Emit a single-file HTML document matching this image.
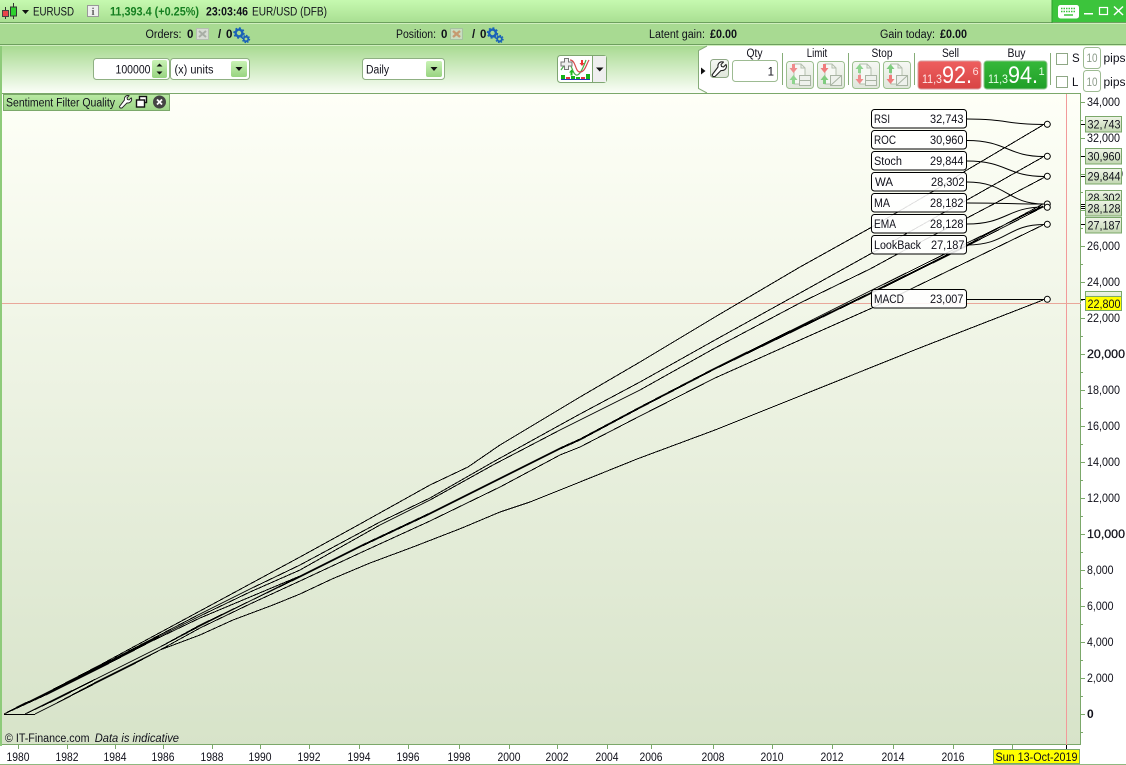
<!DOCTYPE html>
<html><head><meta charset="utf-8"><title>EURUSD</title>
<style>
html,body{margin:0;padding:0;background:#fff;width:1126px;height:765px;overflow:hidden}
svg{display:block}
text{font-family:"Liberation Sans",Arial,sans-serif;font-size:11.5px;fill:#10101a}
.b{font-weight:bold}
.m{text-anchor:middle}
.e{text-anchor:end}
.ln{fill:none;stroke:#000;stroke-width:1}
.cr{shape-rendering:crispEdges}
.ax{font-size:12px}
.tag{fill:url(#tg);stroke:#7ba86a;stroke-width:1}
.lbl{fill:#fff;fill-opacity:.88;stroke:#000;stroke-width:1}
.mk{fill:#fdfff5;stroke:#000;stroke-width:1}
.btn{fill:url(#gb);stroke:#9dbf90;stroke-width:1}
</style></head><body>
<svg width="1126" height="765" viewBox="0 0 1126 765" xmlns="http://www.w3.org/2000/svg">
<defs>
<linearGradient id="t1" x1="0" y1="0" x2="0" y2="1"><stop offset="0" stop-color="#c6f9b0"/><stop offset="1" stop-color="#a8de91"/></linearGradient>
<linearGradient id="t3" x1="0" y1="0" x2="0" y2="1"><stop offset="0" stop-color="#a8da91"/><stop offset="1" stop-color="#fbfef8"/></linearGradient>
<linearGradient id="ch" x1="0" y1="0" x2="0" y2="1"><stop offset="0" stop-color="#fefff7"/><stop offset="1" stop-color="#d7e3c9"/></linearGradient>
<linearGradient id="tg" x1="0" y1="0" x2="0" y2="1"><stop offset="0" stop-color="#eef4e6"/><stop offset="1" stop-color="#c2d6b2"/></linearGradient>
<linearGradient id="gb" x1="0" y1="0" x2="0" y2="1"><stop offset="0" stop-color="#f6f8f4"/><stop offset="1" stop-color="#dfe6da"/></linearGradient>
<linearGradient id="sb" x1="0" y1="0" x2="0" y2="1"><stop offset="0" stop-color="#c9f2b5"/><stop offset="1" stop-color="#98d481"/></linearGradient>
<linearGradient id="red" x1="0" y1="0" x2="0" y2="1"><stop offset="0" stop-color="#ee5f5f"/><stop offset="1" stop-color="#d84444"/></linearGradient>
<linearGradient id="grn" x1="0" y1="0" x2="0" y2="1"><stop offset="0" stop-color="#36b83a"/><stop offset="1" stop-color="#1f9f28"/></linearGradient>
<linearGradient id="ttl" x1="0" y1="0" x2="0" y2="1"><stop offset="0" stop-color="#b9eaa4"/><stop offset="1" stop-color="#9dd488"/></linearGradient>
<g id="gear"><circle cx="5" cy="5" r="3.4" fill="none" stroke="#1a62b8" stroke-width="2.4"/><circle cx="5" cy="5" r="5" fill="none" stroke="#1a62b8" stroke-width="1.4" stroke-dasharray="2 1.9"/><circle cx="12" cy="11" r="2.3" fill="none" stroke="#1a62b8" stroke-width="1.8"/><circle cx="12" cy="11" r="3.6" fill="none" stroke="#1a62b8" stroke-width="1.2" stroke-dasharray="1.6 1.2"/></g>
<path id="wr" d="M1 15 L2 16.500 L4 16.500 L10 10.500 C13 11 15.500 9 15.500 6 L15 4.500 L12.500 7 L10.500 6.500 L10 4.500 L12.500 2 C9 1 6.500 3.500 7 7 Z" fill="#fff" stroke="#222" stroke-width="1.1" stroke-linejoin="round"/>
<g id="tick"><path d="M10 4h7l4 4v16H10z" fill="#f6f8f4" stroke="#b4bfae"/><path d="M17 4v4h4" fill="none" stroke="#b4bfae"/></g>
<path id="dn" d="M0 0h7l-3.500 4z" fill="#111"/>
</defs>

<!-- title bar -->
<rect x="0" y="0" width="1126" height="23" fill="url(#t1)"/>
<rect x="0" y="22" width="1126" height="1" fill="#6d9f5e"/>
<rect x="0" y="23" width="1126" height="1" fill="#cfeebe"/>
<rect x="0" y="24" width="1126" height="20" fill="#a8da92"/>
<rect x="0" y="44" width="1126" height="1" fill="#6d9f5e"/>
<rect x="0" y="45" width="1126" height="1" fill="#cfeebe"/>
<rect x="0" y="46" width="1126" height="47" fill="url(#t3)"/>

<!-- logo -->
<path d="M5.500 7V19" stroke="#333" /><rect x="2.500" y="10.500" width="6" height="6" fill="#e8454a" stroke="#444"/>
<path d="M13.500 3V19" stroke="#333"/><rect x="10.500" y="7" width="6" height="9" fill="#2ed12e" stroke="#333"/>
<path d="M22 10h7l-3.500 4z" fill="#111"/>
<text x="33" y="15.500" textLength="41" lengthAdjust="spacingAndGlyphs">EURUSD</text>
<rect x="87.500" y="5.500" width="11" height="11" fill="#eef0ee" stroke="#999"/>
<text x="93" y="15" class="m b" style="fill:#666;font-family:'Liberation Serif',serif;font-size:11px">i</text>
<text x="110" y="15.500" class="b" style="fill:#157f20" textLength="89" lengthAdjust="spacingAndGlyphs">11,393.4 (+0.25%)</text>
<text x="206" y="15.500" class="b" textLength="42" lengthAdjust="spacingAndGlyphs">23:03:46</text>
<text x="252" y="15.500" textLength="75" lengthAdjust="spacingAndGlyphs">EUR/USD (DFB)</text>

<!-- window buttons -->
<rect x="1052" y="0" width="74" height="22" fill="#3cc43c"/>
<rect x="1051.500" y="0" width="1" height="23" fill="#2e9f2e"/>
<rect x="1058" y="5" width="21" height="13.500" rx="2.500" fill="#fff"/>
<path d="M1061 8.500h15M1061 11.500h15" stroke="#3cc43c" stroke-width="1.500" stroke-dasharray="1.500 1"/><path d="M1064 15h9" stroke="#3cc43c" stroke-width="1.500"/>
<rect x="1084" y="13" width="9" height="1.500" fill="#fff"/>
<rect x="1099.500" y="7.500" width="8" height="7" fill="none" stroke="#fff" stroke-width="1.200"/>
<path d="M1114 6.500l9 8.500M1123 6.500l-9 8.500" stroke="#fff" stroke-width="1.500"/>

<!-- row 2 -->
<text x="145.500" y="38" textLength="36" lengthAdjust="spacingAndGlyphs">Orders:</text><text x="187" y="38" class="b">0</text>
<rect x="196.500" y="28.500" width="12" height="11" fill="#d7dcd4" stroke="#b5bfb0"/><path d="M199 31l7 6M206 31l-7 6" stroke="#a8aea5" stroke-width="2"/>
<text x="218" y="38" class="b">/</text><text x="226" y="38" class="b">0</text>
<use href="#gear" x="234" y="28"/>
<text x="396" y="38" textLength="40" lengthAdjust="spacingAndGlyphs">Position:</text><text x="441" y="38" class="b">0</text>
<rect x="450.500" y="28.500" width="12" height="11" fill="#c9dcc0" stroke="#a6c2a0"/><path d="M453 31l7 6M460 31l-7 6" stroke="#c79a70" stroke-width="2.400"/>
<text x="472" y="38" class="b">/</text><text x="480" y="38" class="b">0</text>
<use href="#gear" x="487.500" y="28"/>
<text x="649" y="38" textLength="56" lengthAdjust="spacingAndGlyphs">Latent gain:</text><text x="710" y="38" class="b" textLength="27" lengthAdjust="spacingAndGlyphs">£0.00</text>
<text x="880" y="38" textLength="55" lengthAdjust="spacingAndGlyphs">Gain today:</text><text x="940" y="38" class="b" textLength="27" lengthAdjust="spacingAndGlyphs">£0.00</text>

<!-- row 3 left -->
<rect x="93.500" y="58.500" width="76" height="21" rx="3" fill="#fff" stroke="#8fb083"/>
<text x="150.500" y="73.500" class="e" textLength="35" lengthAdjust="spacingAndGlyphs">100000</text>
<rect x="152" y="60" width="15" height="18" rx="2" fill="url(#sb)"/>
<path d="M156.500 66.500l3-3 3 3z M156.500 71.500l3 3 3-3z" fill="#111"/>
<rect x="170.500" y="58.500" width="79" height="21" rx="3" fill="#fff" stroke="#8fb083"/>
<text x="174.500" y="73.500" textLength="39" lengthAdjust="spacingAndGlyphs">(x) units</text>
<rect x="231" y="61" width="16" height="16" rx="2" fill="url(#sb)"/><use href="#dn" x="235.500" y="67"/>
<rect x="362.500" y="58.500" width="82" height="21" rx="3" fill="#fff" stroke="#8fb083"/>
<text x="366" y="73.500" textLength="23" lengthAdjust="spacingAndGlyphs">Daily</text>
<rect x="426" y="61" width="16" height="16" rx="2" fill="url(#sb)"/><use href="#dn" x="430.500" y="67"/>
<!-- chart button -->
<rect x="557.500" y="55.500" width="49" height="27" rx="3" fill="#fff" stroke="#7fa672"/>
<rect x="593" y="56" width="13" height="26" fill="#efefef"/><path d="M592.500 56v26" stroke="#7fa672"/>
<path d="M596 67.500h7.500l-3.750 4z" fill="#111"/>
<path d="M561 70c6-9 8-10 12 1 3 7 7 6 13-11" fill="none" stroke="#48b048" stroke-width="1.200"/>
<path d="M570 60c6 0 5 12 10 12s6-7 9-12" fill="none" stroke="#d64a4a" stroke-width="1.200"/>
<path d="M564.500 58.500h4v3.500h3.500v4h-3.500v3.500h-4v-3.500h-3.500v-4h3.500z" fill="#eee" stroke="#777"/>
<path d="M571.500 69.500l2.500 3h-1.500v3h-2v-3h-1.500z" fill="#1db91d"/><path d="M581 60h2v3h1.500l-2.500 3-2.500-3h1.500z" fill="#e33"/>
<path d="M561 79.500h29" stroke="#2233bb"/>
<g fill="#17b017"><rect x="561" y="75" width="4" height="4"/><rect x="571" y="76" width="4" height="3"/><rect x="586" y="74" width="4" height="5"/></g>
<g fill="#e0383c"><rect x="566" y="77" width="4" height="2"/><rect x="581" y="77" width="4" height="2"/></g><rect x="576" y="77" width="4" height="2" fill="#17b017"/>

<!-- right panel -->
<path d="M707 46H1126V93H707L698 88.500V50.500Z" fill="#fff"/>
<path d="M707 46L698.500 50.500V88.500L707 93" fill="none" stroke="#86ad78"/>
<path d="M701 67.500l4.500 3.500-4.500 3.500z" fill="#111"/>
<rect x="710.500" y="59.500" width="18" height="18" rx="3" fill="url(#gb)" stroke="#8fa886"/>
<use href="#wr" x="711" y="60"/>
<rect x="732.500" y="60.500" width="45" height="21" rx="3" fill="#fff" stroke="#9dbb92"/>
<text x="774" y="75.500" class="e">1</text>
<text x="754.500" y="57" class="m" textLength="16" lengthAdjust="spacingAndGlyphs">Qty</text>
<text x="817" y="57" class="m" textLength="20.500" lengthAdjust="spacingAndGlyphs">Limit</text>
<text x="882" y="57" class="m" textLength="21" lengthAdjust="spacingAndGlyphs">Stop</text>
<text x="950.500" y="57" class="m" textLength="17" lengthAdjust="spacingAndGlyphs">Sell</text>
<text x="1016.500" y="57" class="m" textLength="18" lengthAdjust="spacingAndGlyphs">Buy</text>
<path d="M782.500 53v32M848.500 53v32M914.500 53v32M1050.500 53v32" stroke="#86ad78"/>
<g>
<rect x="786.500" y="61.500" width="27" height="27" rx="3" class="btn"/>
<rect x="817.500" y="61.500" width="27" height="27" rx="3" class="btn"/>
<rect x="852.500" y="61.500" width="27" height="27" rx="3" class="btn"/>
<rect x="883.500" y="61.500" width="27" height="27" rx="3" class="btn"/>
</g>
<use href="#tick" x="784" y="60"/><use href="#tick" x="815" y="60"/><use href="#tick" x="850" y="60"/><use href="#tick" x="881" y="60"/>
<!-- arrows -->
<path d="M792 64h3v4h2.500l-4 5-4-5h2.500z" fill="#ef8c8c"/><path d="M792 84v-4h-2.500l4-5 4 5h-2.500v4z" fill="#8fd48f"/>
<path d="M823 64h3v4h2.500l-4 5-4-5h2.500z" fill="#ef7c7c"/><path d="M823 84v-4h-2.500l4-5 4 5h-2.500v4z" fill="#7fcc7f"/>
<path d="M858 73v-4h-2.500l4-5 4 5h-2.500v4z" fill="#8fd48f"/><path d="M858 75h3v4h2.500l-4 5-4-5h2.500z" fill="#ef8c8c"/>
<path d="M889 73v-4h-2.500l4-5 4 5h-2.500v4z" fill="#7fcc7f"/><path d="M889 75h3v4h2.500l-4 5-4-5h2.500z" fill="#ef7c7c"/>
<g fill="#eef1ec" stroke="#a9b4a4"><rect x="799.500" y="75.500" width="11" height="10"/><rect x="830.500" y="75.500" width="11" height="10"/><rect x="865.500" y="75.500" width="11" height="10"/><rect x="896.500" y="75.500" width="11" height="10"/></g>
<path d="M799.500 80.500h11M865.500 80.500h11M830.500 85.500l11-10M896.500 85.500l11-10" stroke="#a9b4a4" fill="none"/>

<rect x="918" y="61" width="63" height="28" rx="3" fill="url(#red)" stroke="#d9a0a0"/>
<rect x="984" y="61" width="63" height="28" rx="3" fill="url(#grn)" stroke="#8fc78f"/>
<text x="922" y="83" style="fill:#ffe8e8" textLength="20" lengthAdjust="spacingAndGlyphs">11,3</text>
<text x="942" y="83" style="fill:#fff;font-size:24px" textLength="30" lengthAdjust="spacingAndGlyphs">92.</text>
<text x="972.500" y="75" style="fill:#ffdcdc;font-size:11px">6</text>
<text x="988" y="83" style="fill:#e8ffe8" textLength="20" lengthAdjust="spacingAndGlyphs">11,3</text>
<text x="1008" y="83" style="fill:#fff;font-size:24px" textLength="30" lengthAdjust="spacingAndGlyphs">94.</text>
<text x="1038.500" y="75" style="fill:#e0ffe0;font-size:11px">1</text>

<rect x="1056.500" y="53.500" width="11" height="11" fill="#fff" stroke="#8fa886"/>
<rect x="1056.500" y="76.500" width="11" height="11" fill="#fff" stroke="#8fa886"/>
<text x="1072" y="62">S</text><text x="1072" y="86">L</text>
<rect x="1083.500" y="47.500" width="17" height="21" rx="3" fill="#fff" stroke="#9dbb92"/>
<rect x="1083.500" y="70.500" width="17" height="21" rx="3" fill="#fff" stroke="#9dbb92"/>
<text x="1092" y="62" class="m" style="fill:#8a9a88" textLength="11" lengthAdjust="spacingAndGlyphs">10</text><text x="1092" y="86" class="m" style="fill:#8a9a88" textLength="11" lengthAdjust="spacingAndGlyphs">10</text>
<text x="1103.500" y="62" textLength="22" lengthAdjust="spacingAndGlyphs">pips</text><text x="1103.500" y="86" textLength="22" lengthAdjust="spacingAndGlyphs">pips</text>

<!-- chart -->
<rect x="2" y="94" width="1079" height="651" fill="url(#ch)"/>
<rect x="0" y="46" width="2" height="700" fill="#8ecb7a"/>
<path d="M2 93.500H1081" stroke="#7ba86a"/>
<path d="M1080.500 93V745" stroke="#7ba86a"/>
<path d="M2 744.500H1081" stroke="#7ba86a"/>
<path d="M1066.500 94V745" stroke="#f29a9a"/>
<path d="M2 303.500H1081" stroke="#e9a79a"/>

<!-- curves -->
<g>
<path class="ln cr" d="M4 714.500H35"/>
<polyline class="ln cr" points="4,714 50,691 100,665 150,638 200,611 250,584 300,557 360,524 430,485 468,467 500,445 580,397 640,362 715,317 800,267 872,227 932,192 967,170 1043,125"/>
<polyline class="ln cr" points="4,714 50,692 100,666 150,640 200,614 250,589 300,565 380,522 430,498 493,462 560,425 580,414 640,382 715,340 800,293 872,253 943,213 967,200 1043,157"/>
<polyline class="ln cr" points="4,714 50,693 100,667 150,641 200,616 250,592 300,570 380,525 430,500 493,465 560,430 580,420 640,390 715,348 800,303 870,269 905,250 967,218 1045,177"/>
<polyline class="ln cr" points="4,714 25,703 50,693 100,668 150,642 200,618 250,597 300,576 360,546 430,513 500,478 560,448 580,439 640,407 715,368 800,327 870,293 967,245 1043,204"/>
<polyline class="ln cr" points="25,714 55,699 100,677 160,647 200,625 250,601 300,576 360,546 430,513 500,478 560,448 580,439 640,407 715,368 800,326 870,291 967,243 1043,206"/>
<polyline class="ln cr" points="25,714 55,700 100,677 160,647 200,626 250,601 300,577 360,547 430,514 500,479 560,449 580,440 640,408 715,369 800,328 870,294 967,246 1043,207"/>
<polyline class="ln cr" points="35,714 55,704 100,680 130,665 160,650 200,628 250,604 300,581 360,553 430,521 500,487 560,455 580,447 640,416 715,378 800,340 872,308 913,288 1043,225"/>
<polyline class="ln cr" points="35,714 55,704 100,681 130,666 160,650 200,635 233,620 273,605 300,594 332,579 370,563 413,547 462,528 500,512 530,502 580,482 637,459 715,430 800,396 917,349 1043,300"/>
</g>

<!-- connectors -->
<path class="ln" d="M967 119C1007 119 1007 124.500 1044 124.500"/>
<path class="ln" d="M967 140.500C1007 140.500 1007 156.500 1044 156.500"/>
<path class="ln" d="M967 161C1007 161 1007 176.500 1044 176.500"/>
<path class="ln" d="M967 182C1007 182 1007 204 1044 204"/>
<path class="ln" d="M967 203C1007 203 1007 204 1044 204"/>
<path class="ln" d="M967 224C1007 224 1007 207 1044 207"/>
<path class="ln" d="M967 245C1007 245 1007 224.500 1044 224.500"/>
<path class="ln" d="M967 299.500H1044"/>

<!-- labels -->
<g>
<rect class="lbl" x="871.500" y="109.500" width="95" height="18.500" rx="3"/>
<rect class="lbl" x="871.500" y="130.500" width="95" height="18.500" rx="3"/>
<rect class="lbl" x="871.500" y="151.500" width="95" height="18.500" rx="3"/>
<rect class="lbl" x="871.500" y="172.500" width="95" height="18.500" rx="3"/>
<rect class="lbl" x="871.500" y="193.500" width="95" height="18.500" rx="3"/>
<rect class="lbl" x="871.500" y="214.500" width="95" height="18.500" rx="3"/>
<rect class="lbl" x="871.500" y="235.500" width="95" height="18.500" rx="3"/>
<rect class="lbl" x="871.500" y="289.500" width="95" height="18.500" rx="3"/>
</g>
<text x="874" y="123" textLength="16" lengthAdjust="spacingAndGlyphs">RSI</text><text x="930" y="123" textLength="33.500" lengthAdjust="spacingAndGlyphs">32,743</text>
<text x="874" y="144" textLength="22" lengthAdjust="spacingAndGlyphs">ROC</text><text x="930" y="144" textLength="33.500" lengthAdjust="spacingAndGlyphs">30,960</text>
<text x="874" y="165" textLength="28" lengthAdjust="spacingAndGlyphs">Stoch</text><text x="930" y="165" textLength="33.500" lengthAdjust="spacingAndGlyphs">29,844</text>
<text x="875" y="186" textLength="18" lengthAdjust="spacingAndGlyphs">WA</text><text x="931" y="186" textLength="33.500" lengthAdjust="spacingAndGlyphs">28,302</text>
<text x="874" y="207" textLength="16" lengthAdjust="spacingAndGlyphs">MA</text><text x="930" y="207" textLength="33.500" lengthAdjust="spacingAndGlyphs">28,182</text>
<text x="874" y="228" textLength="22" lengthAdjust="spacingAndGlyphs">EMA</text><text x="930" y="228" textLength="33.500" lengthAdjust="spacingAndGlyphs">28,128</text>
<text x="874" y="249" textLength="47" lengthAdjust="spacingAndGlyphs">LookBack</text><text x="931" y="249" textLength="33.500" lengthAdjust="spacingAndGlyphs">27,187</text>
<text x="874" y="303" textLength="30" lengthAdjust="spacingAndGlyphs">MACD</text><text x="930" y="303" textLength="33.500" lengthAdjust="spacingAndGlyphs">23,007</text>

<!-- markers -->
<circle class="mk" cx="1047.300" cy="124.300" r="3"/>
<circle class="mk" cx="1047.300" cy="156.300" r="3"/>
<circle class="mk" cx="1047.300" cy="176.300" r="3"/>
<circle class="mk" cx="1047.300" cy="204" r="3"/>
<circle class="mk" cx="1047.300" cy="207.300" r="3"/>
<circle class="mk" cx="1047.300" cy="224.300" r="3"/>
<circle class="mk" cx="1047.300" cy="299.300" r="3"/>

<!-- title tab -->
<rect x="3.500" y="94.500" width="166" height="16" fill="url(#ttl)" stroke="#7ba86a"/>
<text x="6" y="106.500" textLength="109" lengthAdjust="spacingAndGlyphs">Sentiment Filter Quality</text>
<use href="#wr" transform="translate(118.500,94) scale(.85)"/>
<rect x="139.500" y="96.500" width="7" height="6" fill="#fff" stroke="#111" stroke-width="1.400"/>
<rect x="136.500" y="100" width="8" height="7" fill="#fff" stroke="#111" stroke-width="1.400"/>
<circle cx="159.500" cy="102" r="6.500" fill="#444"/>
<path d="M157 99.500l5 5M162 99.500l-5 5" stroke="#fff" stroke-width="1.800"/>

<text x="5" y="742" textLength="84.500" lengthAdjust="spacingAndGlyphs">© IT-Finance.com</text>
<text x="94.700" y="742" style="font-style:italic" textLength="84.300" lengthAdjust="spacingAndGlyphs">Data is indicative</text>

<!-- y axis ticks -->
<path stroke="#7ba86a" d="M1081 102.500h4M1081 120.500h2M1081 138.500h4M1081 156.500h2M1081 174.500h4M1081 192.500h2M1081 210.500h4M1081 228.500h2M1081 246.500h4M1081 264.500h2M1081 282.500h4M1081 300.500h2M1081 318.500h4M1081 336.500h2M1081 354.500h4M1081 372.500h2M1081 390.500h4M1081 408.500h2M1081 426.500h4M1081 444.500h2M1081 462.500h4M1081 480.500h2M1081 498.500h4M1081 516.500h2M1081 534.500h4M1081 552.500h2M1081 570.500h4M1081 588.500h2M1081 606.500h4M1081 624.500h2M1081 642.500h4M1081 660.500h2M1081 678.500h4M1081 696.500h2M1081 714.500h4M1081 732.500h2"/>
<g>
<text class="ax" x="1087" y="106" textLength="33" lengthAdjust="spacingAndGlyphs">34,000</text>
<text class="ax" x="1087" y="142" textLength="33" lengthAdjust="spacingAndGlyphs">32,000</text>
<text class="ax" x="1090" y="178" textLength="33" lengthAdjust="spacingAndGlyphs">30,000</text>
<text class="ax" x="1087" y="250" textLength="33" lengthAdjust="spacingAndGlyphs">26,000</text>
<text class="ax" x="1087" y="286" textLength="33" lengthAdjust="spacingAndGlyphs">24,000</text>
<text class="ax" x="1087" y="322" textLength="33" lengthAdjust="spacingAndGlyphs">22,000</text>
<text class="ax" x="1087" y="358" style="stroke:#10101a;stroke-width:.25" textLength="38" lengthAdjust="spacingAndGlyphs">20,000</text>
<text class="ax" x="1087" y="394" textLength="33" lengthAdjust="spacingAndGlyphs">18,000</text>
<text class="ax" x="1087" y="430" textLength="33" lengthAdjust="spacingAndGlyphs">16,000</text>
<text class="ax" x="1087" y="466" textLength="33" lengthAdjust="spacingAndGlyphs">14,000</text>
<text class="ax" x="1087" y="502" textLength="33" lengthAdjust="spacingAndGlyphs">12,000</text>
<text class="ax" x="1087" y="538" style="stroke:#10101a;stroke-width:.25" textLength="38" lengthAdjust="spacingAndGlyphs">10,000</text>
<text class="ax" x="1087" y="574" textLength="26.500" lengthAdjust="spacingAndGlyphs">8,000</text>
<text class="ax" x="1087" y="610" textLength="26.500" lengthAdjust="spacingAndGlyphs">6,000</text>
<text class="ax" x="1087" y="646" textLength="26.500" lengthAdjust="spacingAndGlyphs">4,000</text>
<text class="ax" x="1087" y="682" textLength="26.500" lengthAdjust="spacingAndGlyphs">2,000</text>
<text class="ax" x="1087" y="718" style="font-weight:bold">0</text>
</g>
<!-- value tags -->
<path stroke="#000" d="M1081 124.500h4M1081 156.500h4M1081 176.500h4M1081 204.500h4M1081 206.500h4M1081 208.500h4M1081 224.500h4M1081 299.500h4"/>
<rect class="tag" x="1085.500" y="190.500" width="36" height="14"/><text class="ax" x="1087.500" y="202" textLength="33" lengthAdjust="spacingAndGlyphs">28,302</text>
<rect class="tag" x="1085.500" y="116.500" width="36" height="15.500"/><text class="ax" x="1087.500" y="128.500" textLength="33" lengthAdjust="spacingAndGlyphs">32,743</text>
<rect class="tag" x="1085.500" y="148.500" width="36" height="15.500"/><text class="ax" x="1087.500" y="160.500" textLength="33" lengthAdjust="spacingAndGlyphs">30,960</text>
<rect class="tag" x="1085.500" y="168.500" width="36" height="15.500"/><text class="ax" x="1087.500" y="180.500" textLength="33" lengthAdjust="spacingAndGlyphs">29,844</text>
<rect class="tag" x="1085.500" y="200.500" width="36" height="15.500"/><text class="ax" x="1087.500" y="212.500" textLength="33" lengthAdjust="spacingAndGlyphs">28,128</text>
<rect class="tag" x="1085.500" y="217.500" width="36" height="15.500"/><text class="ax" x="1087.500" y="229.500" textLength="33" lengthAdjust="spacingAndGlyphs">27,187</text>
<rect class="tag" x="1085.500" y="291.500" width="36" height="15"/>
<rect x="1085.500" y="296.500" width="36" height="14" fill="#ffff00" stroke="#7ba86a"/><text class="ax" x="1087.500" y="308" textLength="33" lengthAdjust="spacingAndGlyphs">22,800</text>

<!-- x axis -->
<path stroke="#7ba86a" d="M18.500 745v4M67.500 745v4M115.500 745v4M163.500 745v4M212.500 745v4M260.500 745v4M309.500 745v4M359.500 745v4M408.500 745v4M459.500 745v4M509.500 745v4M557.500 745v4M607.500 745v4M651.500 745v4M713.500 745v4M772.500 745v4M832.500 745v4M893.500 745v4M953.500 745v4M1012.500 745v4"/>
<path stroke="#000" d="M1066.500 745v4"/>
<g>
<text class="ax m" x="18" y="761" textLength="23" lengthAdjust="spacingAndGlyphs">1980</text><text class="ax m" x="67" y="761" textLength="23" lengthAdjust="spacingAndGlyphs">1982</text><text class="ax m" x="115" y="761" textLength="23" lengthAdjust="spacingAndGlyphs">1984</text><text class="ax m" x="163" y="761" textLength="23" lengthAdjust="spacingAndGlyphs">1986</text><text class="ax m" x="212" y="761" textLength="23" lengthAdjust="spacingAndGlyphs">1988</text><text class="ax m" x="260" y="761" textLength="23" lengthAdjust="spacingAndGlyphs">1990</text><text class="ax m" x="309" y="761" textLength="23" lengthAdjust="spacingAndGlyphs">1992</text><text class="ax m" x="359" y="761" textLength="23" lengthAdjust="spacingAndGlyphs">1994</text><text class="ax m" x="408" y="761" textLength="23" lengthAdjust="spacingAndGlyphs">1996</text><text class="ax m" x="459" y="761" textLength="23" lengthAdjust="spacingAndGlyphs">1998</text><text class="ax m" x="509" y="761" textLength="23" lengthAdjust="spacingAndGlyphs">2000</text><text class="ax m" x="557" y="761" textLength="23" lengthAdjust="spacingAndGlyphs">2002</text><text class="ax m" x="607" y="761" textLength="23" lengthAdjust="spacingAndGlyphs">2004</text><text class="ax m" x="651" y="761" textLength="23" lengthAdjust="spacingAndGlyphs">2006</text><text class="ax m" x="713" y="761" textLength="23" lengthAdjust="spacingAndGlyphs">2008</text><text class="ax m" x="772" y="761" textLength="23" lengthAdjust="spacingAndGlyphs">2010</text><text class="ax m" x="832" y="761" textLength="23" lengthAdjust="spacingAndGlyphs">2012</text><text class="ax m" x="893" y="761" textLength="23" lengthAdjust="spacingAndGlyphs">2014</text><text class="ax m" x="953" y="761" textLength="23" lengthAdjust="spacingAndGlyphs">2016</text>
</g>
<rect x="0" y="764" width="1126" height="1" fill="#8fb87f"/>
<rect x="993.500" y="749.500" width="86" height="14" fill="#ffff00" stroke="#7ba86a"/>
<text class="ax m" x="1036.500" y="761" textLength="82" lengthAdjust="spacingAndGlyphs">Sun 13-Oct-2019</text>
</svg>
</body></html>
